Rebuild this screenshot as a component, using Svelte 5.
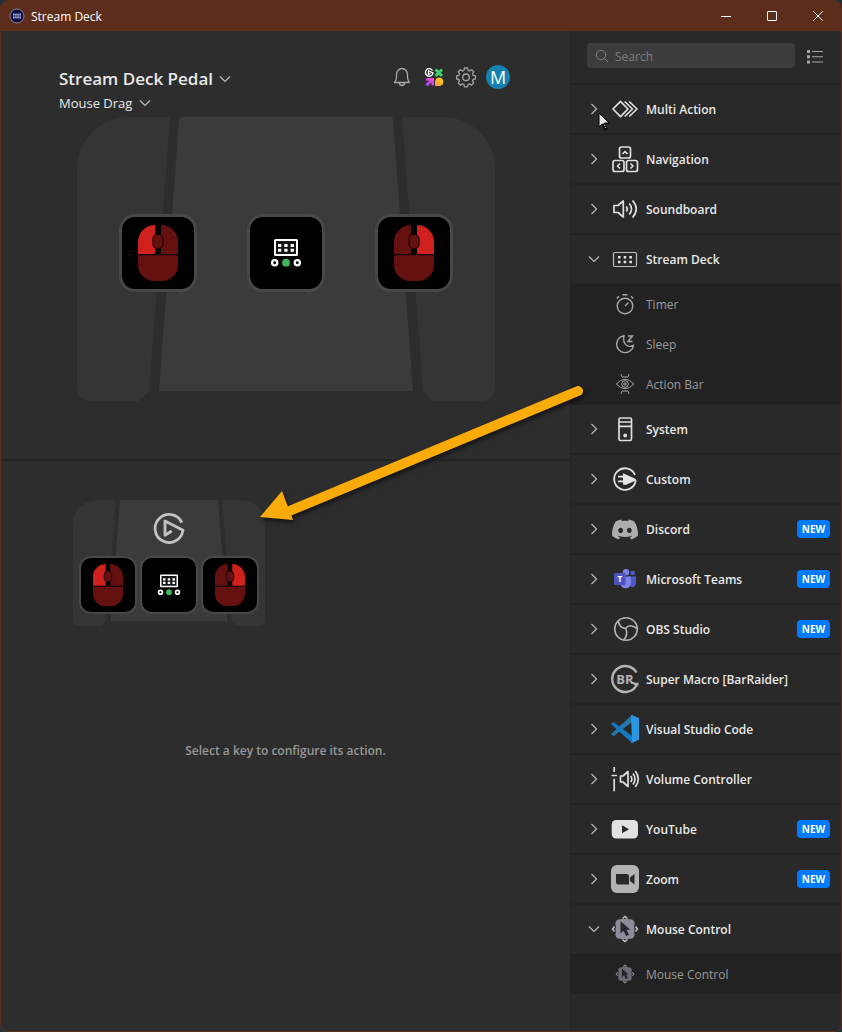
<script>
  let search = $state('');
  let device = $state('Stream Deck Pedal');
  let profile = $state('Mouse Drag');

  let groups = $state([
    { name: 'Multi Action', icon: 'multi' },
    { name: 'Navigation', icon: 'navigation' },
    { name: 'Soundboard', icon: 'sound' },
    {
      name: 'Stream Deck', icon: 'deck', open: true,
      items: [
        { name: 'Timer', icon: 'timer' },
        { name: 'Sleep', icon: 'sleep' },
        { name: 'Action Bar', icon: 'eye' }
      ]
    },
    { name: 'System', icon: 'system' },
    { name: 'Custom', icon: 'custom' },
    { name: 'Discord', icon: 'discord', isNew: true },
    { name: 'Microsoft Teams', icon: 'teams', isNew: true },
    { name: 'OBS Studio', icon: 'obs', isNew: true },
    { name: 'Super Macro [BarRaider]', icon: 'barraider' },
    { name: 'Visual Studio Code', icon: 'vscode' },
    { name: 'Volume Controller', icon: 'volume' },
    { name: 'YouTube', icon: 'youtube', isNew: true },
    { name: 'Zoom', icon: 'zoom', isNew: true },
    {
      name: 'Mouse Control', icon: 'mouse', open: true,
      items: [{ name: 'Mouse Control', icon: 'mouse', small: true }]
    }
  ]);

  const keys = ['left', 'deck', 'right'];
</script>

{#snippet chevron(open)}
  <svg class="chevron" width="12" height="12" viewBox="0 0 12 12" aria-hidden="true">
    <path d={open ? 'M1 3.5l5 5 5-5' : 'M3.5 1l5 5-5 5'} />
  </svg>
{/snippet}

{#snippet icon(name)}
  {#if name === 'multi'}
    <g class="line"><path d="M9.5 6.3L17 14l-7.500 7.700L2 14z" /><path d="M13.700 6.500L21.500 14l-7.800 7.500M18.200 6.500L26 14l-7.800 7.500" /></g>
  {:else if name === 'navigation'}
    <g class="line">
      <rect x="8.500" y="2" width="11" height="11" rx="2" /><path d="M11.500 9L14 6.500 16.500 9" />
      <rect x="2" y="15.500" width="11" height="11" rx="2" /><path d="M9 18.500L6.500 21 9 23.500" />
      <rect x="15.500" y="15.500" width="11" height="11" rx="2" /><path d="M19.500 18.500L22 21l-2.500 2.500" />
    </g>
  {:else if name === 'sound'}
    <g class="line"><path d="M3 10.500h4L12.300 6v16L7 17.500H3z" /><path d="M15.300 11.500q2 2.500 0 5M18.300 8.500q4.500 5.500 0 11M21.500 5.500q7.500 8.500 0 17" /></g>
  {:else if name === 'deck'}
    <rect x="2.500" y="7.500" width="23" height="14" rx="1.200" fill="none" stroke="#bdbdbd" stroke-width="1.200" />
    <path d="M7 11h2.500v2.500H7zM12.700 11h2.500v2.500h-2.500zM18.400 11h2.500v2.500h-2.500zM7 15.700h2.500v2.500H7zM12.700 15.700h2.500v2.500h-2.500zM18.400 15.700h2.500v2.500h-2.500z" fill="#e6e6e6" />
  {:else if name === 'timer'}
    <g class="dim"><circle cx="14" cy="16" r="7.800" /><path d="M14 16l3.500-3.500M11.500 4.800h5M5.700 8.500L8 6.300M22.300 8.500L20 6.300" /></g>
  {:else if name === 'sleep'}
    <g class="dim"><path d="M13 5.700a8.500 8.500 0 1 0 9.500 9.800c-4 2-11.500.5-9.500-9.800z" /><path d="M17 6h4.300L17 11.500h4.500" stroke-width="1.600" /></g>
  {:else if name === 'eye'}
    <g class="dim thin"><path d="M5.200 14q8.800-9.500 17.600 0-8.800 9.500-17.600 0z" /><circle cx="14" cy="14" r="3.300" /><circle cx="14" cy="14" r="1.200" /><path d="M10.300 4v1.500q0 1.500 1.500 1.500h4.400q1.500 0 1.500-1.500V4M10.300 24v-1.500q0-1.500 1.500-1.500h4.400q1.500 0 1.500 1.500V24" /></g>
  {:else if name === 'system'}
    <g class="line"><rect x="8" y="3" width="12.500" height="22.500" rx="1.500" /><path d="M8 7h12.500M8 11.300h12.500" /></g>
    <circle cx="14.200" cy="20.500" r="1.900" fill="#e0e0e0" />
  {:else if name === 'custom'}
    <path d="M23.600 9.200A10.800 10.800 0 1 0 24.600 16" fill="none" stroke="#e0e0e0" stroke-width="1.800" stroke-linecap="round" />
    <path d="M12 8.300l12.800 5.700v1.600L14.500 20 12 19.500v-2.300H7v-1.700h5v-3H7v-1.700h5z" fill="#e6e6e6" />
  {:else if name === 'discord'}
    <g transform="translate(1 1.500) scale(1.083)"><path fill="#adadad" d="M20.317 4.370a19.800 19.800 0 0 0-4.885-1.515.074.074 0 0 0-.079.037c-.211.375-.445.865-.608 1.250-1.845-.276-3.680-.276-5.487 0-.164-.393-.406-.875-.618-1.250a.077.077 0 0 0-.079-.037 19.740 19.740 0 0 0-4.885 1.515.07.07 0 0 0-.032.028C.533 9.046-.319 13.580.099 18.058a.082.082 0 0 0 .031.056c2.053 1.508 4.041 2.423 5.993 3.029a.078.078 0 0 0 .084-.028c.462-.630.873-1.295 1.226-1.994a.076.076 0 0 0-.042-.106c-.653-.248-1.274-.550-1.872-.892a.077.077 0 0 1-.008-.128c.126-.094.252-.192.372-.291a.074.074 0 0 1 .078-.011c3.928 1.793 8.180 1.793 12.061 0a.074.074 0 0 1 .079.010c.120.099.246.198.373.292a.077.077 0 0 1-.007.128 12.300 12.300 0 0 1-1.873.891.077.077 0 0 0-.041.107c.360.698.772 1.363 1.225 1.993a.076.076 0 0 0 .084.029c1.961-.607 3.950-1.522 6.002-3.029a.077.077 0 0 0 .031-.055c.500-5.177-.838-9.674-3.549-13.660a.061.061 0 0 0-.031-.029zM8.020 15.331c-1.183 0-2.157-1.086-2.157-2.419s.956-2.419 2.157-2.419c1.211 0 2.176 1.095 2.157 2.419 0 1.333-.956 2.419-2.157 2.419zm7.975 0c-1.183 0-2.157-1.086-2.157-2.419s.955-2.419 2.157-2.419c1.211 0 2.176 1.095 2.157 2.419 0 1.333-.946 2.419-2.157 2.419z" /></g>
  {:else if name === 'teams'}
    <circle cx="21.700" cy="8" r="2.300" fill="#5059c9" /><path d="M17 11.500h8v6.500a4 4 0 0 1-5 4z" fill="#5059c9" />
    <circle cx="15" cy="7.200" r="3.200" fill="#7b83eb" /><path d="M10 11.500h10V18a5.300 5.300 0 0 1-10.500 1z" fill="#7b83eb" />
    <rect x="3" y="8" width="11.500" height="12" rx="1" fill="#4b53bc" />
    <text x="8.700" y="17" text-anchor="middle" font-size="8" font-weight="700" fill="#fff">T</text>
  {:else if name === 'obs'}
    <g fill="none" stroke="#b3b3b3" stroke-width="1.600"><circle cx="15" cy="14" r="11.300" /><path d="M7.300 5.800Q8 12.500 14.700 13.500 18.500 8 26 13.500M14.700 13.500Q17.500 20 12.500 25" /></g>
  {:else if name === 'barraider'}
    <path d="M25.500 7.500A13 13 0 1 0 25.500 20.500" fill="none" stroke="#b3b3b3" stroke-width="2.400" />
    <path d="M19 16l5 4.800h3.500v-3h-3z" fill="#b3b3b3" />
    <text x="14" y="18.500" text-anchor="middle" font-size="13" font-weight="700" fill="#b3b3b3">BR</text>
  {:else if name === 'vscode'}
    <path d="M0 19l2.500 2.200L21 7V0z" fill="#2477ad" />
    <path d="M0 9l2.500-2L21 21v7z" fill="#1479c4" /><path d="M20 0.200l1-.2 7 3.300v21.400L21 28l-1-.2 1-1z" fill="#2b98e0" />
  {:else if name === 'volume'}
    <g class="line"><path d="M3.200 2v5M0.500 10.500H6M3.200 13.700v12.500" /><path d="M9.500 11h2.500l5-4.500v15L12 17H9.500z" /><path d="M19.700 11q2.300 3 0 6M22 8.500q4 5.500 0 11M24.300 6q6 8 0 16" /></g>
  {:else if name === 'youtube'}
    <rect x="0.700" y="5" width="26.300" height="18.500" rx="4.500" fill="#e2e2e2" /><path d="M11 10.200l7 4-7 4z" fill="#292929" />
  {:else if name === 'zoom'}
    <rect width="28" height="28" rx="6" fill="#b3b3b3" /><path d="M5 9h10.500q2.500 0 2.500 2.500V19.500H7.500Q5 19.500 5 17zM19 12.500l4.500-3.500v10.500L19 16z" fill="#292929" />
  {:else if name === 'mouse'}
    <path d="M9 4.300q5-1 10 0 4.700 0 4.700 4.700-1 2.500 0 5-1 2.500 0 5 0 4.700-4.700 4.700-5 1-10 0-4.700 0-4.700-4.700 1-2.500 0-5 1-2.500 0-5Q4.300 4.300 9 4.300z" fill="#8c8b9c" />
    <path d="M11.500 3.500L14 1.500l2.500 2M11.500 24.500l2.500 2 2.500-2M3.500 11.500L1.500 14l2 2.500M24.500 11.500l2 2.500-2 2.500" fill="none" stroke="#c4c4c4" stroke-width="1.500" />
    <path d="M9.500 6v12.500l3-2.700 2.700 5.200 2.800-1.200-2.500-5h3.800z" fill="#292929" />
  {/if}
{/snippet}

{#snippet keyArt(kind)}
  <svg viewBox="0 0 72 72" aria-hidden="true">
    {#if kind === 'deck'}
      <rect x="25" y="23" width="22" height="15" rx="0.500" fill="#151515" stroke="#fff" stroke-width="2" />
      <path d="M28 27h3.300v3H28zM34.300 27h3.300v3h-3.300zM40.600 27h3.300v3h-3.300zM28 31.700h3.300v3H28zM34.300 31.700h3.300v3h-3.300zM40.600 31.700h3.300v3h-3.300z" fill="#fff" />
      <circle cx="24.700" cy="45.700" r="2.600" fill="none" stroke="#fff" stroke-width="2.300" />
      <circle cx="36" cy="45.700" r="3.900" fill="#3db757" />
      <circle cx="47.300" cy="45.700" r="2.600" fill="none" stroke="#fff" stroke-width="2.300" />
    {:else}
      <path d="M33 8v29H16V25A17 17 0 0 1 33 8z" fill={kind === 'left' ? '#cf211e' : '#651110'} />
      <path d="M39 8v29h17V25A17 17 0 0 0 39 8z" fill={kind === 'right' ? '#cf211e' : '#651110'} />
      <path d="M16 38.300h40V48a16 16 0 0 1-16 16h-8a16 16 0 0 1-16-16z" fill="#651110" />
      <rect x="31" y="17.500" width="10" height="14" rx="4.500" fill="#651110" stroke="#180504" stroke-width="1.200" />
    {/if}
  </svg>
{/snippet}

{#snippet pedal(small)}
  <div class="pedal" class:small>
    <svg class="shape" viewBox="0 0 418 284" preserveAspectRatio="none" aria-hidden="true">
      <path d="M0 52A52 52 0 0 1 52 0h39q2 0 2 2L72 274l-10 10H13a13 13 0 0 1-13-13z" fill="#353535" />
      <path d="M418 52A52 52 0 0 0 366 0h-39q-2 0-2 2l21 272 10 10h49a13 13 0 0 0 13-13z" fill="#353535" />
      <path d="M105 0h208q3 0 3 3l20 271H82L102 3q0-3 3-3z" fill="#3b3b3b" />
    </svg>
    {#if small}
      <svg class="logo" viewBox="0 0 32 32" aria-hidden="true">
        <path d="M28.800 10.600A14 14 0 1 0 30 18.200L12 9v14.300l6.800-4.300" fill="none" stroke="#c2c2c2" stroke-width="2.800" stroke-linejoin="round" />
      </svg>
    {/if}
    <div class="keys">
      {#each keys as kind}
        <button class="key" aria-label={kind}>{@render keyArt(kind)}</button>
      {/each}
    </div>
  </div>
{/snippet}

<div class="window">
  <header class="titlebar">
    <svg width="16" height="16" viewBox="0 0 16 16" aria-hidden="true">
      <circle cx="8" cy="8" r="7" fill="#0b0d49" stroke="#8d7f88" />
      <path d="M4 5.500h8v5H4z" fill="#9fa3c9" /><path d="M5.800 5v6M8 5v6M10.200 5v6M3.500 8h9" stroke="#0b0d49" stroke-width="0.500" />
    </svg>
    <span>Stream Deck</span>
    <div class="controls">
      <button aria-label="Minimize"><svg width="10" height="10" viewBox="0 0 10 10"><path d="M0 5.500h10" /></svg></button>
      <button aria-label="Maximize"><svg width="10" height="10" viewBox="0 0 10 10"><rect x="0.500" y="0.500" width="9" height="9" rx="0.500" /></svg></button>
      <button aria-label="Close"><svg width="10" height="10" viewBox="0 0 10 10"><path d="M0.300 0.300l9.400 9.400M9.700 0.300L0.300 9.700" /></svg></button>
    </div>
  </header>

  <div class="body">
    <main>
      <section class="canvas">
        <div class="head">
          <div class="pickers">
            <span class="picker device">
              <select aria-label="Device" bind:value={device}><option>Stream Deck Pedal</option></select>
              {@render chevron(true)}
            </span>
            <span class="picker">
              <select aria-label="Profile" bind:value={profile}><option>Mouse Drag</option></select>
              {@render chevron(true)}
            </span>
          </div>
          <div class="tools">
            <button aria-label="Notifications">
              <svg width="24" height="24" viewBox="0 0 24 24" fill="none" stroke="#a8a8a8" stroke-width="1.300" stroke-linejoin="round">
                <path d="M4.500 17.500q2-2 2-6v-2a5.500 6 0 0 1 11 0v2q0 4 2 6z" /><path d="M9.300 18q.5 2.500 2.700 2.500t2.700-2.500" />
              </svg>
            </button>
            <button aria-label="Marketplace">
              <svg width="24" height="24" viewBox="0 0 24 24">
                <defs>
                  <linearGradient id="pink" x1="0" y1="1" x2="1" y2="0"><stop offset="0" stop-color="#8a3cff" /><stop offset="1" stop-color="#ff4fc0" /></linearGradient>
                  <linearGradient id="gold" x1="0" y1="1" x2="1" y2="0"><stop offset="0" stop-color="#ff9a5c" /><stop offset="1" stop-color="#ffd500" /></linearGradient>
                </defs>
                <path d="M10.500 5.500A3.800 3.800 0 1 0 11 8L6.500 6v3.500L8.500 8.500" fill="none" stroke="#fff" stroke-width="1.300" />
                <path d="M13.500 4.500l6.500 6.500M20 4.500L13.500 11" stroke="#3fd16f" stroke-width="3" />
                <path d="M4 13h8v7.500H9.500v-3L5.500 21.500 3 19.500 7 15.700H4z" fill="url(#pink)" />
                <path d="M13 21v-4a4.200 4.200 0 1 1 4.200 4z" fill="url(#gold)" />
              </svg>
            </button>
            <button aria-label="Preferences">
              <svg width="24" height="24" viewBox="0 0 24 24" fill="none" stroke="#a3a3a3" stroke-width="1.300" stroke-linejoin="round">
                <path d="M10.500 3h3l.6 2.300 1.400.6 2.100-1.200 2.100 2.100-1.200 2.100.6 1.400 2.300.6v3l-2.300.6-.6 1.400 1.200 2.100-2.100 2.100-2.100-1.200-1.400.6-.6 2.300h-3l-.6-2.300-1.400-.6-2.100 1.200-2.100-2.100 1.200-2.100-.6-1.400L2.600 13.900v-3l2.300-.6.6-1.400-1.200-2.100 2.100-2.100 2.100 1.200 1.400-.6z" /><circle cx="12" cy="12.300" r="3.300" />
              </svg>
            </button>
            <button class="avatar">M</button>
          </div>
        </div>
        {@render pedal(false)}
      </section>

      <section class="inspector">
        {@render pedal(true)}
        <p>Select a key to configure its action.</p>
      </section>
    </main>

    <aside>
      <div class="searchbar">
        <label class="search">
          <svg width="14" height="14" viewBox="0 0 14 14" fill="none" stroke="#858585"><circle cx="6" cy="6" r="4.700" /><path d="M9.500 9.500l3.500 3.500" /></svg>
          <input type="search" placeholder="Search" aria-label="Search" bind:value={search} />
        </label>
        <button class="listview" aria-label="List view">
          <svg width="16" height="14" viewBox="0 0 16 14" fill="#a8a8a8"><path d="M0 0h3v3H0zM0 5.300h3v3H0zM0 10.600h3v3H0zM5 1h11v1H5zM5 6.300h11v1H5zM5 11.600h11v1H5z" /></svg>
        </button>
      </div>
      <nav>
        {#each groups as group}
          <button class="row" aria-expanded={!!group.open} onclick={() => (group.open = !group.open)}>
            {@render chevron(group.open)}
            <svg class="glyph" viewBox="0 0 28 28" aria-hidden="true">{@render icon(group.icon)}</svg>
            <span>{group.name}</span>
            {#if group.isNew}<b class="badge">NEW</b>{/if}
          </button>
          {#if group.open && group.items}
            <div class="items">
              {#each group.items as item}
                <button class="item">
                  <svg class="glyph" class:faded={item.small} viewBox={item.small ? '-6 -6 40 40' : '0 0 28 28'} aria-hidden="true">{@render icon(item.icon)}</svg>
                  <span>{item.name}</span>
                </button>
              {/each}
            </div>
          {/if}
        {/each}
      </nav>
    </aside>
  </div>

  <svg class="pointer-line" width="340" height="150" viewBox="0 0 340 150" aria-hidden="true">
    <path d="M28 132L319 11" stroke="#f9ab0a" stroke-width="10" stroke-linecap="round" />
    <path d="M1 137l22-26 11 29z" fill="#f9ab0a" />
  </svg>
  <svg class="cursor" width="13" height="20" viewBox="0 0 13 20" aria-hidden="true">
    <path d="M1 1v14l3.200-3 2.600 6 2.500-1.100L6.800 11h4.400z" fill="#e2e2e2" stroke="#000" />
    <path d="M4.500 12l2.500 6.300 2.500-1.200-2.700-6z" fill="#000" /><path d="M6.300 12.500l1.800 4.300" stroke="#ddd" stroke-dasharray="1.500 1" />
  </svg>
</div>

<style>
  :global(body) { margin: 0; background: #24303a; }
  .window {
    position: relative; box-sizing: border-box; min-height: 100vh;
    display: flex; flex-direction: column;
    background: #2d2d2d; border: 1px solid #5c2d1a; border-radius: 8px; overflow: hidden;
    font-family: "Open Sans", "Noto Sans", sans-serif; font-size: 12px; color: #e8e8e8;
  }
  button, select, input { font: inherit; color: inherit; background: none; border: 0; padding: 0; margin: 0; }
  svg { display: block; flex: none; }

  .titlebar { display: flex; align-items: center; height: 30px; padding-left: 8px; gap: 6px; background: #5c2d1a; color: #fff; }
  .controls { display: flex; margin-left: auto; align-self: stretch; }
  .controls button { width: 46px; display: grid; place-items: center; }
  .controls svg { fill: none; stroke: #fff; stroke-width: 1; }

  .body { flex: 1; display: grid; grid-template-columns: minmax(0, 1fr) 271px; }
  main { display: flex; flex-direction: column; }
  .canvas { height: 428px; border-bottom: 2px solid #232323; }
  .head { display: flex; justify-content: space-between; align-items: flex-start; padding: 34px 60px 0 58px; }
  .pickers { display: flex; flex-direction: column; align-items: flex-start; }
  .picker { display: flex; align-items: center; gap: 6px; height: 20px; font-size: 13px; }
  .device { height: 28px; font-size: 17px; font-weight: 600; }
  .device select { height: 26px; align-self: flex-start; }
  select { appearance: none; }
  .tools { display: flex; gap: 8px; }
  .tools button { width: 24px; height: 24px; }
  .tools .avatar { border-radius: 50%; background: #1481b3; color: #fff; font-size: 18px; line-height: 24px; text-align: center; }

  .pedal { display: grid; width: 418px; height: 284px; margin: 4px auto 0; }
  .pedal > :global(*) { grid-area: 1 / 1; }
  .shape { width: 100%; height: 100%; }
  .keys { display: flex; justify-content: center; align-items: flex-start; gap: 50px; padding-top: 97px; }
  .key { box-sizing: border-box; width: 78px; height: 78px; border: 3px solid #484848; border-radius: 16px; background: #000; }
  .key svg { width: 100%; height: 100%; }
  .pedal.small { width: 192px; height: 126px; margin: 0; }
  .small .keys { gap: 3px; padding-top: 56px; }
  .small .key { width: 58px; height: 58px; border-width: 2px; border-radius: 12px; }
  .logo { width: 32px; height: 32px; justify-self: center; margin-top: 12px; }

  .inspector { padding: 39px 72px 0; }
  .inspector p { margin: 115px 0 0; text-align: center; font-weight: 600; line-height: 20px; color: #989898; }

  aside { background: #292929; border-left: 1px solid #232323; }
  .searchbar { display: flex; align-items: flex-start; gap: 12px; height: 41px; padding: 12px 18px 0 16px; }
  .search { flex: 1; min-width: 0; display: flex; align-items: center; gap: 6px; height: 25px; padding: 0 8px; border-radius: 4px; background: #3c3c3c; }
  .search input { flex: 1; min-width: 0; padding-top: 1px; outline: none; }
  .search input::placeholder { color: #7d7d7d; opacity: 1; }
  .listview { width: 16px; margin-top: 7px; }

  nav { border-top: 1px solid #242424; margin-top: -1px; }
  .row { box-sizing: border-box; width: 100%; height: 50px; display: flex; align-items: center; padding: 0 11px 0 17px; border-top: 1px solid #242424; border-bottom: 1px solid #242424; text-align: left; font-weight: 600; white-space: nowrap; }
  .row span, .item span { padding-top: 1px; }
  .chevron { fill: none; stroke: #bababa; stroke-width: 1.2; }
  .glyph { width: 28px; height: 28px; margin: 0 7px 0 11px; overflow: visible; }
  .glyph :global(.line) { fill: none; stroke: #dedede; stroke-width: 1.7; stroke-linejoin: round; }
  .glyph :global(.dim) { fill: none; stroke: #a8a8a8; stroke-width: 1.4; }
  .glyph :global(.dim.thin) { stroke-width: 1; }
  .faded { opacity: 0.7; }
  .badge { margin-left: auto; width: 33px; height: 18px; border-radius: 4px; background: #007aff; color: #fff; font-size: 10px; line-height: 18px; font-weight: 700; text-align: center; }
  .items { background: #222; }
  .item { width: 100%; height: 40px; display: flex; align-items: center; padding-left: 29px; color: #999; text-align: left; }

  .pointer-line { position: absolute; left: 258px; top: 379px; pointer-events: none; filter: drop-shadow(2px 3px 2px rgba(0, 0, 0, 0.5)); }
  .cursor { position: absolute; left: 597px; top: 111px; pointer-events: none; }
</style>
